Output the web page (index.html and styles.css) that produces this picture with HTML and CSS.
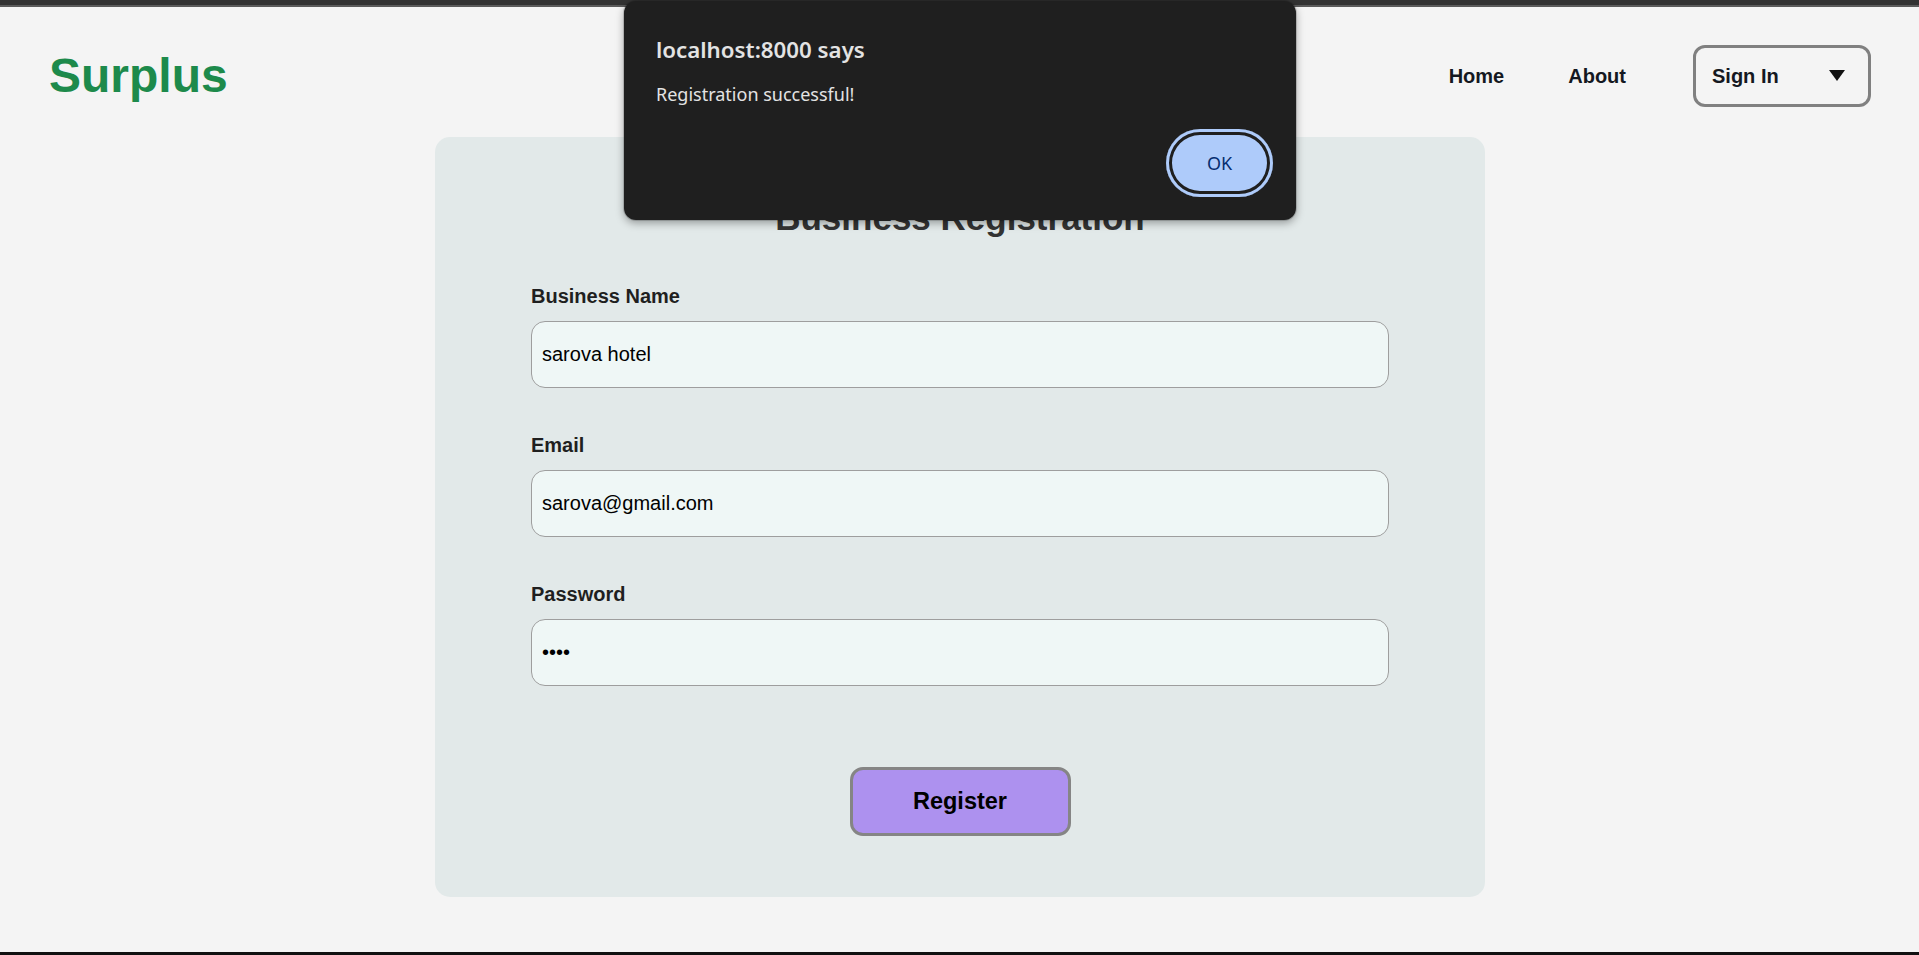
FILE: index.html
```html
<!DOCTYPE html>
<html lang="en">
<head>
<meta charset="utf-8">
<title>Surplus - Business Registration</title>
<link rel="stylesheet" href="styles.css">
</head>
<body>
<div class="topbar"></div>
<header class="header">
  <div class="logo">Surplus</div>
  <nav class="nav">
    <a class="nav-link" href="#">Home</a>
    <a class="nav-link nav-about" href="#">About</a>
    <button class="signin" type="button"><span>Sign In</span><span class="caret"></span></button>
  </nav>
</header>
<main class="main">
  <section class="card">
    <h2 class="card-title">Business Registration</h2>
    <form class="form">
      <div class="fields">
        <div class="field">
          <label class="label">Business Name</label>
          <input class="input" type="text" value="sarova hotel">
        </div>
        <div class="field">
          <label class="label">Email</label>
          <input class="input" type="email" value="sarova@gmail.com">
        </div>
        <div class="field">
          <label class="label">Password</label>
          <input class="input" type="password" value="abcd">
        </div>
      </div>
      <div class="actions">
        <button class="register" type="button">Register</button>
      </div>
    </form>
  </section>
</main>
<div class="bottomline"></div>

<div class="dialog">
  <div class="dialog-title">localhost:8000 says</div>
  <div class="dialog-msg">Registration successful!</div>
  <div class="dialog-actions">
    <button class="ok" type="button">OK</button>
  </div>
</div>
</body>
</html>
```
FILE: styles.css
```css
* { box-sizing: border-box; }

html, body {
  margin: 0;
  padding: 0;
}

body {
  background: #f4f4f4;
  font-family: "Liberation Sans", Arial, sans-serif;
  min-height: 955px;
  height: 955px;
  display: flex;
  flex-direction: column;
  position: relative;
  overflow: hidden;
}

.topbar {
  height: 7px;
  background: #333333;
  border-bottom: 2px solid #5b5b5b;
  flex: none;
}

.header {
  flex: none;
  height: 130px;
  padding: 8px 48px 0 49px;
  display: flex;
  align-items: center;
  justify-content: space-between;
}

.logo {
  font-size: 48px;
  font-weight: 700;
  color: #1d8a4b;
  line-height: 1;
}

.nav {
  display: flex;
  align-items: center;
}

.nav-link {
  font-size: 20px;
  font-weight: 700;
  color: #141821;
  text-decoration: none;
}

.nav-about {
  margin-left: 64px;
}

.signin {
  margin-left: 67px;
  width: 178px;
  height: 62px;
  border: 3px solid #808080;
  border-radius: 12px;
  background: transparent;
  display: flex;
  align-items: center;
  justify-content: space-between;
  padding: 0 23px 0 16px;
  font-family: "Liberation Sans", Arial, sans-serif;
  font-size: 20px;
  font-weight: 700;
  color: #141821;
}

.caret {
  width: 0;
  height: 0;
  border-left: 8.5px solid transparent;
  border-right: 8.5px solid transparent;
  border-top: 11px solid #111111;
  margin-top: -2px;
}

.main {
  flex: 1;
  display: flex;
  justify-content: center;
  align-items: flex-start;
}

.card {
  width: 1050px;
  height: 760px;
  margin-left: 1px;
  background: #e2e9e9;
  border-radius: 15px;
  padding: 61px 96px 61px;
}

.card-title {
  margin: 0;
  text-align: center;
  font-size: 35px;
  font-weight: 700;
  color: #333333;
  line-height: 40px;
}

.form {
  margin-top: 47px;
  display: flex;
  flex-direction: column;
}

.fields {
  display: flex;
  flex-direction: column;
  gap: 46px;
}

.field {
  display: flex;
  flex-direction: column;
}

.label {
  font-size: 20px;
  font-weight: 700;
  line-height: 23px;
  color: #1f1f1f;
  margin-bottom: 13px;
}

.input {
  height: 67px;
  border: 1px solid #9e9e9e;
  border-radius: 14px;
  background: #eff7f6;
  padding: 0 10px;
  font-family: "Liberation Sans", Arial, sans-serif;
  font-size: 20px;
  color: #000000;
  outline: none;
}

.actions {
  margin-top: 81px;
  display: flex;
  justify-content: center;
}

.register {
  width: 221px;
  height: 69px;
  border: 3px solid #858585;
  border-radius: 13px;
  background: #ad91ef;
  font-family: "Liberation Sans", Arial, sans-serif;
  font-size: 23.5px;
  font-weight: 700;
  color: #000000;
}

.bottomline {
  flex: none;
  height: 3px;
  background: #111111;
}

.dialog {
  position: absolute;
  top: 1px;
  left: 624px;
  width: 672px;
  height: 219px;
  background: #1f1f1f;
  border-radius: 12px;
  box-shadow: 0 3px 8px rgba(0, 0, 0, 0.35), 0 0 0 1px rgba(0, 0, 0, 0.15);
  padding: 35px 23px 0 32px;
  font-family: "Noto Sans", "Open Sans", sans-serif;
  color: #e8eaed;
  display: flex;
  flex-direction: column;
}

.dialog-title {
  font-size: 22.3px;
  font-weight: 600;
  line-height: 28px;
  color: #e3e3e3;
}

.dialog-msg {
  margin-top: 18px;
  font-size: 18px;
  line-height: 24px;
  color: #e3e3e3;
}

.dialog-actions {
  display: flex;
  justify-content: flex-end;
  margin-top: 23px;
}

.ok {
  width: 107px;
  height: 68px;
  border: none;
  border-radius: 34px;
  background: #aecbfa;
  box-shadow: inset 0 0 0 3px #aecbfa, inset 0 0 0 6px #1f1f1f;
  font-family: "Noto Sans", "Open Sans", sans-serif;
  font-size: 18px;
  color: #062e6f;
}
```
